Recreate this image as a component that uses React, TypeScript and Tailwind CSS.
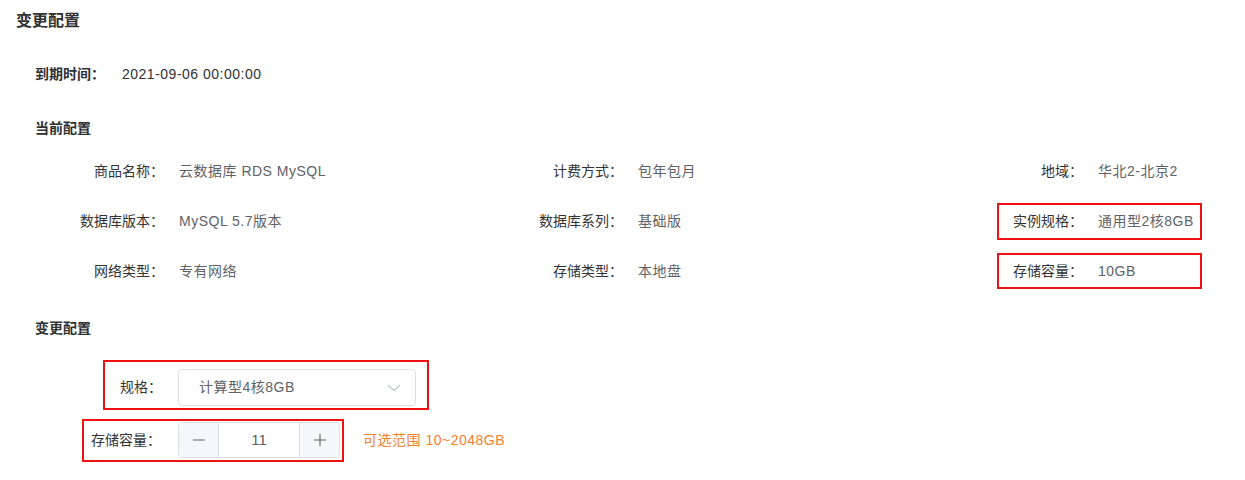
import React from "react";

const font = { fontFamily: '"Liberation Sans", "Noto Sans CJK SC", sans-serif' };

type Item = { label: string; value: string; mark?: boolean };

const rows: Item[][] = [
  [
    { label: "商品名称：", value: "云数据库 RDS MySQL" },
    { label: "计费方式：", value: "包年包月" },
    { label: "地域：", value: "华北2-北京2" },
  ],
  [
    { label: "数据库版本：", value: "MySQL 5.7版本" },
    { label: "数据库系列：", value: "基础版" },
    { label: "实例规格：", value: "通用型2核8GB", mark: true },
  ],
  [
    { label: "网络类型：", value: "专有网络" },
    { label: "存储类型：", value: "本地盘" },
    { label: "存储容量：", value: "10GB", mark: true },
  ],
];

function Chevron() {
  return (
    <svg width="16" height="16" viewBox="0 0 16 16" fill="none">
      <path d="M2.5 5.5 L8 10.5 L13.5 5.5" stroke="#c0c4cc" strokeWidth="1.2" strokeLinecap="round" strokeLinejoin="round" />
    </svg>
  );
}

export default function App() {
  return (
    <div className="w-[1245px] h-[480px] bg-white text-[14px] text-[#333]" style={font}>
      <div className="pl-4 pt-[9px] h-8 text-[16px] leading-6 font-bold text-[#303133]">变更配置</div>
      <div className="pl-[35px]">
        <div className="mt-8 flex h-5 items-center leading-5">
          <span className="font-bold text-[#303133] mr-[17px]">到期时间：</span>
          <span className="text-[#303133] tracking-[0.5px]">2021-09-06 00:00:00</span>
        </div>
        <div className="mt-[34px] h-5 leading-5 font-bold text-[#303133]">当前配置</div>
        <div className="mt-[15px] ml-[24px] grid grid-cols-[459px_460px_1fr] gap-y-[14px]">
          {rows.map((row, ri) =>
            row.map((it, ci) => (
              <div key={`${ri}-${ci}`} className="relative flex h-9 items-center">
                <span className="w-[105px] text-right text-[#333] whitespace-nowrap">{it.label}</span>
                <span className="ml-[15px] text-[#606266] whitespace-nowrap tracking-[0.5px]">{it.value}</span>
                {it.mark && (
                  <div className={`absolute left-[19px] top-0 w-[205px] border-2 border-[#ee1111] ${ri === 1 ? "h-[37px]" : "h-9"}`} />
                )}
              </div>
            ))
          )}
        </div>
        <div className="mt-[29px] h-5 leading-5 font-bold text-[#303133]">变更配置</div>
        <div className="mt-[22px] ml-[68px] w-fit flex items-center border-2 border-[#ee1111] pt-[7px] pb-[2px] pl-[15px] pr-[11px]">
          <span className="w-[42px] text-[#333]">规格：</span>
          <div className="ml-[16px] flex h-[37px] w-[238px] items-center justify-between rounded-[4px] border border-[#dcdfe6] pl-5 pr-[13px]">
            <span className="text-[#606266] tracking-[0.5px]">计算型4核8GB</span>
            <Chevron />
          </div>
        </div>
        <div className="mt-[9px] flex items-center">
          <div className="ml-[47px] w-fit flex items-center border-2 border-[#ee1111] pt-[1px] pb-[2px] pl-[7px] pr-[2px]">
            <span className="w-[71px] text-[#333]">存储容量：</span>
            <div className="ml-[16px] flex h-[36px] w-[162px] rounded-[4px] border border-[#dcdfe6] overflow-hidden">
              <div className="flex w-[40px] items-center justify-center bg-[#f5f7fa] border-r border-[#dcdfe6] text-[#606266]">
                <svg width="14" height="14" viewBox="0 0 14 14"><path d="M1 7 H13" stroke="#606266" strokeWidth="1.1" /></svg>
              </div>
              <div className="flex flex-1 items-center justify-center text-[#606266] text-[15px]">11</div>
              <div className="flex w-[40px] items-center justify-center bg-[#f5f7fa] border-l border-[#dcdfe6]">
                <svg width="14" height="14" viewBox="0 0 14 14"><path d="M1 7 H13 M7 1 V13" stroke="#606266" strokeWidth="1.1" /></svg>
              </div>
            </div>
          </div>
          <span className="ml-[19px] text-[#f5802a] tracking-[0.5px]">可选范围 10~2048GB</span>
        </div>
      </div>
    </div>
  );
}
